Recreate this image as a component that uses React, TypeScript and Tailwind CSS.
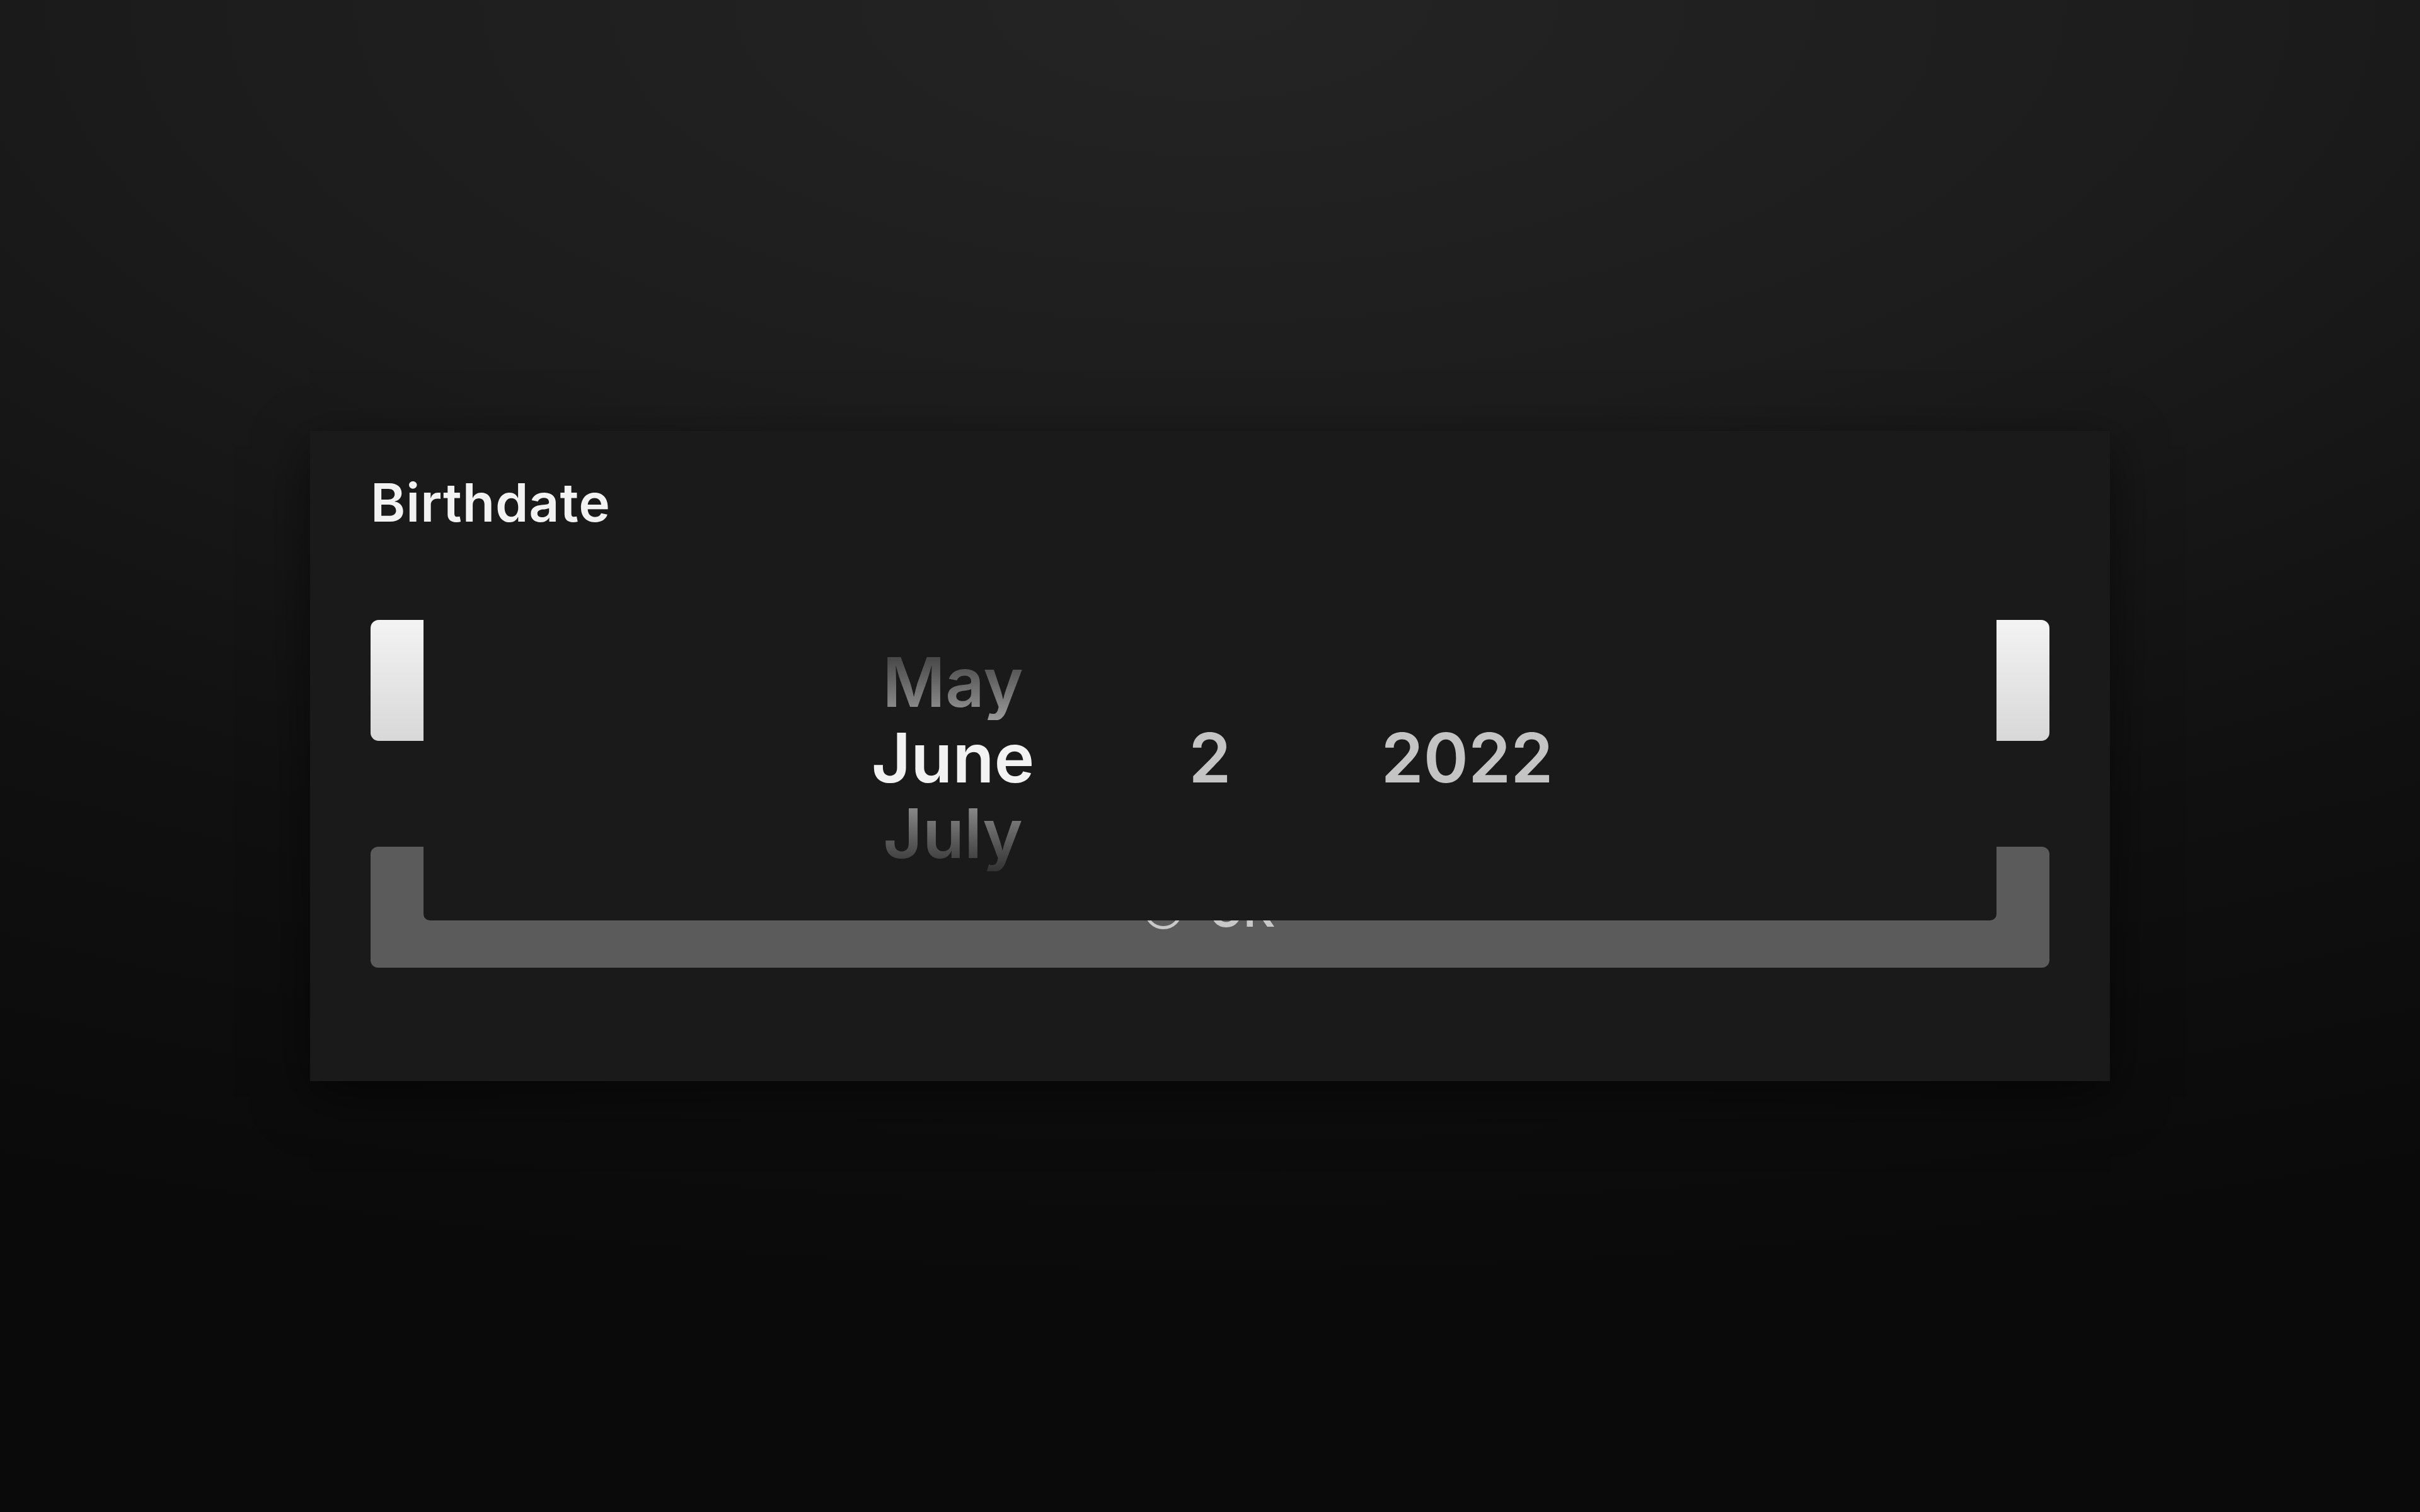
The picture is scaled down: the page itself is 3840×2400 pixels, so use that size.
import React from 'react';

const months = [
  { label: 'May', tone: 'from-[#393939] to-[#9a9a9a]' },
  { label: 'June', tone: '' },
  { label: 'July', tone: 'from-[#9a9a9a] to-[#333333]' },
];

const PickerColumn: React.FC<{ children: React.ReactNode }> = ({ children }) => (
  <div className="flex w-[408px] flex-col items-center">{children}</div>
);

const App: React.FC = () => {
  return (
    <div className="flex min-h-screen w-full items-center justify-center bg-[radial-gradient(120%_85%_at_50%_0%,#242424_0%,#1c1c1c_35%,#101010_70%,#0a0a0a_100%)] font-['Inter','Noto_Sans',sans-serif]">
      <div className="h-[1032px] w-[2856px] bg-[#1a1a1a] px-[96px] pt-[54px] shadow-[0_24px_80px_rgba(0,0,0,0.55)]">
        <h2 className="text-[84px] font-semibold leading-[120px] tracking-[0.9px] text-[#f2f2f2]">Birthdate</h2>

        {/* wheel picker row */}
        <div className="mt-[126px] flex h-[192px] items-start">
          <div className="h-[192px] w-[84px] rounded-l-[13px] bg-linear-to-b from-[#f3f3f3] to-[#d8d8d8]" />
          <div className="relative z-10 h-[477px] w-[2496px] rounded-b-[10px] bg-[#1a1a1a] pt-[39px]">
            <div className="flex items-center justify-center text-[108px] font-semibold leading-[120px]">
              <PickerColumn>
                {months.map((m) =>
                  m.tone ? (
                    <span
                      key={m.label}
                      className={`bg-linear-to-b ${m.tone} bg-clip-text text-transparent`}
                    >
                      {m.label}
                    </span>
                  ) : (
                    <span key={m.label} className="text-[#f2f2f2]">
                      {m.label}
                    </span>
                  )
                )}
              </PickerColumn>
              <PickerColumn>
                <span className="text-[#c4c4c4]">2</span>
              </PickerColumn>
              <PickerColumn>
                <span className="text-[#c4c4c4]">2022</span>
              </PickerColumn>
            </div>
          </div>
          <div className="h-[192px] w-[84px] rounded-r-[13px] bg-linear-to-b from-[#f3f3f3] to-[#d8d8d8]" />
        </div>

        <button className="mt-[168px] flex h-[192px] w-full items-center justify-center gap-[42px] rounded-[12px] bg-[#5b5b5b] pt-[10px] text-[#c8c8c8]">
          <svg width="60" height="60" viewBox="0 0 60 60" fill="none">
            <circle cx="30" cy="30" r="27.5" stroke="currentColor" strokeWidth="5" />
          </svg>
          <span className="text-[72px] font-semibold leading-[72px]">OK</span>
        </button>
      </div>
    </div>
  );
};

export default App;
